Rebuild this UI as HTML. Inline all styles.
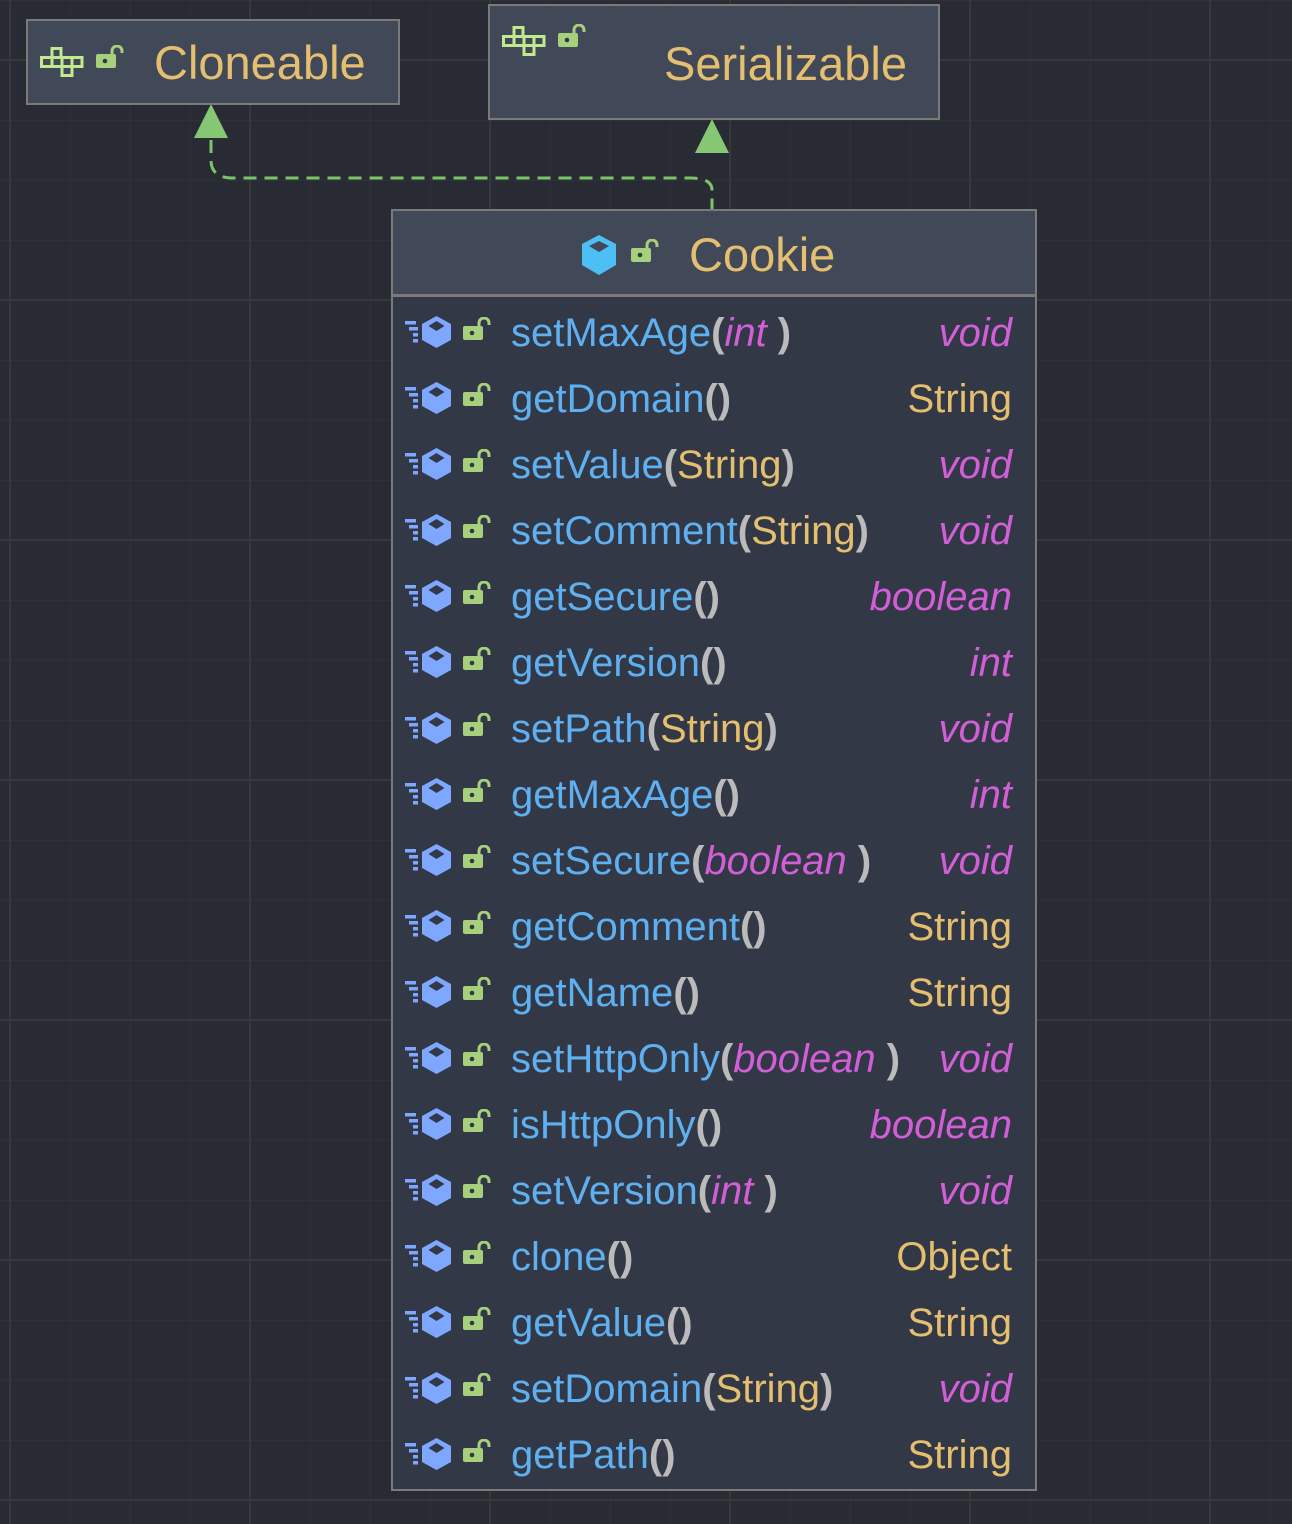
<!DOCTYPE html>
<html><head><meta charset="utf-8"><style>
*{margin:0;padding:0;box-sizing:border-box}
body{width:1292px;height:1524px;overflow:hidden;position:relative;background-color:#282b33;
background-image:
linear-gradient(to right,#37383a 2px,transparent 2px),
linear-gradient(to bottom,#37383a 2px,transparent 2px),
linear-gradient(to right,#2f3136 1px,transparent 1px),
linear-gradient(to bottom,#2f3136 1px,transparent 1px);
background-size:240px 240px,240px 240px,60px 60px,60px 60px;
background-position:9px 0,0 59px,10px 0,0 0;
font-family:"Liberation Sans",sans-serif}
.box{position:absolute;border:2px solid #7a7a7a;background:#414858}
.t{position:absolute;color:#e5bf70;font-size:47px;white-space:nowrap}
.row{position:absolute;left:0;width:641px;height:66px}
.row svg{position:absolute}
.n{position:absolute;left:118px;top:9px;font-size:40px;color:#5fb0f0;white-space:nowrap}
.p{color:#bbbbbb;font-weight:bold}
.s{color:#e5bf70}
.i{color:#d35fd8;font-style:italic}
.r{position:absolute;right:22px;top:9px;font-size:40px;white-space:nowrap}
</style></head><body>
<svg width="0" height="0" style="position:absolute">
<defs>
<g id="lock"><rect x="0" y="9" width="20" height="14" rx="2" fill="#a6d07c"/><circle cx="9" cy="16" r="2.3" fill="#333846"/><path d="M16 10 V6 a5 5 0 0 1 10 0 V8" fill="none" stroke="#a6d07c" stroke-width="3"/></g>
<g id="iface" fill="none" stroke="#c2e98e" stroke-width="3"><rect x="12" y="1.5" width="9" height="9"/><rect x="1.5" y="10.5" width="10.5" height="9"/><rect x="12" y="10.5" width="10" height="9"/><rect x="22" y="10.5" width="10" height="9"/><rect x="32" y="10.5" width="10" height="9"/><rect x="22" y="19.5" width="10" height="9"/></g>
<g id="meth"><rect x="0" y="5" width="11" height="3.5" fill="#7ea7ff"/><rect x="4" y="11" width="9" height="3.5" fill="#7ea7ff"/><rect x="8" y="17" width="5" height="3.5" fill="#7ea7ff"/><rect x="8" y="23" width="5" height="3.5" fill="#7ea7ff"/><path d="M31.5 0 L46 8 V24 L31.5 32 L17 24 V8 Z" fill="#7ea7ff"/><path d="M31.5 5 L39.5 10 L31.5 15 L23.5 10 Z" fill="#333846"/></g>
</defs></svg>

<svg style="position:absolute;left:0;top:0" width="1292" height="220">
<path d="M211 140 V160 Q211 178 233 178 H690 Q712 178 712 190 V210" fill="none" stroke="#7cc46a" stroke-width="3" stroke-dasharray="13 8"/>
<path d="M211 104 L194 138 L228 138 Z" fill="#86c774"/>
<path d="M712 119 L695 153 L729 153 Z" fill="#86c774"/>
</svg>

<div class="box" style="left:26px;top:19px;width:374px;height:86px">
<svg style="position:absolute;left:12px;top:26px" width="44" height="31"><use href="#iface"/></svg>
<svg style="position:absolute;left:68px;top:24px" width="28" height="26"><use href="#lock"/></svg>
<div class="t" style="left:126px;top:14px">Cloneable</div>
</div>
<div class="box" style="left:488px;top:4px;width:452px;height:116px">
<svg style="position:absolute;left:12px;top:20px" width="44" height="31"><use href="#iface"/></svg>
<svg style="position:absolute;left:68px;top:18px" width="28" height="26"><use href="#lock"/></svg>
<div class="t" style="left:174px;top:30px">Serializable</div>
</div>

<div class="box" style="left:391px;top:209px;width:646px;height:1282px;background:#333846">
<div style="position:absolute;left:0;top:0;width:642px;height:86px;background:#414858;border-bottom:3px solid #7a7a7a"></div>
<svg style="position:absolute;left:186px;top:23px" width="40" height="42"><path d="M20 1 L37 10 V31 L20 41 L3 31 V10 Z" fill="#4dbff5"/><path d="M20 7 L30 12 L20 18 L10 12 Z" fill="#414858"/></svg>
<svg style="position:absolute;left:238px;top:28px" width="28" height="26"><use href="#lock"/></svg>
<div class="t" style="left:296px;top:16px">Cookie</div>
<div id="rows"></div>
</div>
<script>
var R=[
['setMaxAge','<span class="p">(</span><span class="i">int</span><span class="p"> )</span>','<span class="i">void</span>'],
['getDomain','<span class="p">()</span>','<span class="s">String</span>'],
['setValue','<span class="p">(</span><span class="s">String</span><span class="p">)</span>','<span class="i">void</span>'],
['setComment','<span class="p">(</span><span class="s">String</span><span class="p">)</span>','<span class="i">void</span>'],
['getSecure','<span class="p">()</span>','<span class="i">boolean</span>'],
['getVersion','<span class="p">()</span>','<span class="i">int</span>'],
['setPath','<span class="p">(</span><span class="s">String</span><span class="p">)</span>','<span class="i">void</span>'],
['getMaxAge','<span class="p">()</span>','<span class="i">int</span>'],
['setSecure','<span class="p">(</span><span class="i">boolean</span><span class="p"> )</span>','<span class="i">void</span>'],
['getComment','<span class="p">()</span>','<span class="s">String</span>'],
['getName','<span class="p">()</span>','<span class="s">String</span>'],
['setHttpOnly','<span class="p">(</span><span class="i">boolean</span><span class="p"> )</span>','<span class="i">void</span>'],
['isHttpOnly','<span class="p">()</span>','<span class="i">boolean</span>'],
['setVersion','<span class="p">(</span><span class="i">int</span><span class="p"> )</span>','<span class="i">void</span>'],
['clone','<span class="p">()</span>','<span class="s">Object</span>'],
['getValue','<span class="p">()</span>','<span class="s">String</span>'],
['setDomain','<span class="p">(</span><span class="s">String</span><span class="p">)</span>','<span class="i">void</span>'],
['getPath','<span class="p">()</span>','<span class="s">String</span>']];
var h='';
R.forEach(function(r,k){var top=91+k*66;
h+='<div class="row" style="top:'+top+'px"><svg style="left:12px;top:14px" width="48" height="34"><use href="#meth"/></svg><svg style="left:70px;top:15px" width="28" height="26"><use href="#lock"/></svg><div class="n">'+r[0]+r[1]+'</div><div class="r">'+r[2]+'</div></div>';});
document.getElementById('rows').innerHTML=h;
</script>
</body></html>
